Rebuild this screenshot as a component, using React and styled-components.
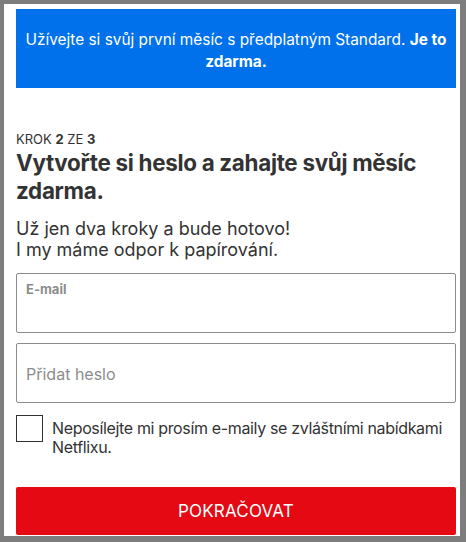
import React from 'react';
import styled, {createGlobalStyle} from 'styled-components';

const GlobalStyle = createGlobalStyle`
    html, body {
        margin: 0;
        padding: 0;
        background: #7d7d7d;
    }
    body {
        font-family: Inter, "Liberation Sans", sans-serif;
        color: #333;
    }
`;

const Frame = styled.div`
    background: #fff;
    margin: 4px 6px 6px 4px;
    height: 532px;
    box-sizing: border-box;
    padding: 5px 4px 0 12px;
    display: flex;
    flex-direction: column;
`;

const Banner = styled.div`
    background: #0071eb;
    color: #fff;
    height: 79px;
    display: flex;
    align-items: center;
    justify-content: center;
    text-align: center;
    font-size: 15.4px;
    line-height: 22px;
    padding: 4px 6px 0;
    box-sizing: border-box;

    b {
        font-weight: 700;
    }
`;

const Step = styled.div`
    margin-top: 43px;
    font-size: 13px;
    line-height: 16px;
    color: #333;

    b {
        font-weight: 700;
    }
`;

const Title = styled.h1`
    margin: 2px 0 13px;
    font-size: 22.4px;
    line-height: 28px;
    letter-spacing: -0.3px;
    font-weight: 700;
    color: #333;
`;

const Lead = styled.p`
    margin: 0 0 13px;
    font-size: 18px;
    line-height: 21px;
    color: #333;
`;

const Field = styled.label`
    display: block;
    position: relative;
    height: 60px;
    border: 1px solid #8c8c8c;
    border-radius: 2px;
    box-sizing: border-box;
    margin-bottom: ${p => p.gap}px;
`;

const FloatLabel = styled.span`
    position: absolute;
    left: 9px;
    top: ${p => (p.small ? '7px' : '20px')};
    font-size: ${p => (p.small ? '13px' : '16px')};
    font-weight: ${p => (p.small ? 700 : 400)};
    color: #8c8c8c;
`;

const Input = styled.input`
    width: 100%;
    height: 100%;
    border: 0;
    background: transparent;
    padding: 20px 9px 0;
    box-sizing: border-box;
    font: inherit;
    outline: none;
`;

const CheckRow = styled.div`
    display: flex;
    gap: 9px;
    align-items: flex-start;
    margin-top: 12px;
`;

const Box = styled.span`
    flex: 0 0 auto;
    width: 27px;
    height: 27px;
    border: 1px solid #333;
    box-sizing: border-box;
`;

const CheckText = styled.span`
    font-size: 16px;
    line-height: 19px;
    letter-spacing: -0.35px;
    color: #333;
    padding-top: 4px;
`;

const Button = styled.button`
    margin-top: 30px;
    height: 48px;
    border: 0;
    border-radius: 2px;
    background: #e50914;
    color: #fff;
    font-family: inherit;
    font-size: 17px;
    letter-spacing: 0.2px;
    width: 100%;
`;

export default function App() {
    return (
        <>
            <GlobalStyle/>
            <Frame>
                <Banner>
                    <div>
                        Užívejte si svůj první měsíc s předplatným Standard. <b>Je to zdarma.</b>
                    </div>
                </Banner>

                <Step>KROK <b>2</b> ZE <b>3</b></Step>
                <Title>Vytvořte si heslo a zahajte svůj měsíc<br/>zdarma.</Title>
                <Lead>
                    Už jen dva kroky a bude hotovo!<br/>
                    I my máme odpor k papírování.
                </Lead>

                <Field gap={10}>
                    <FloatLabel small>E-mail</FloatLabel>
                    <Input type="email"/>
                </Field>
                <Field gap={0}>
                    <FloatLabel>Přidat heslo</FloatLabel>
                    <Input type="password"/>
                </Field>

                <CheckRow>
                    <Box/>
                    <CheckText>Neposílejte mi prosím e-maily se zvláštními nabídkami Netflixu.</CheckText>
                </CheckRow>

                <Button>POKRAČOVAT</Button>
            </Frame>
        </>
    );
}
